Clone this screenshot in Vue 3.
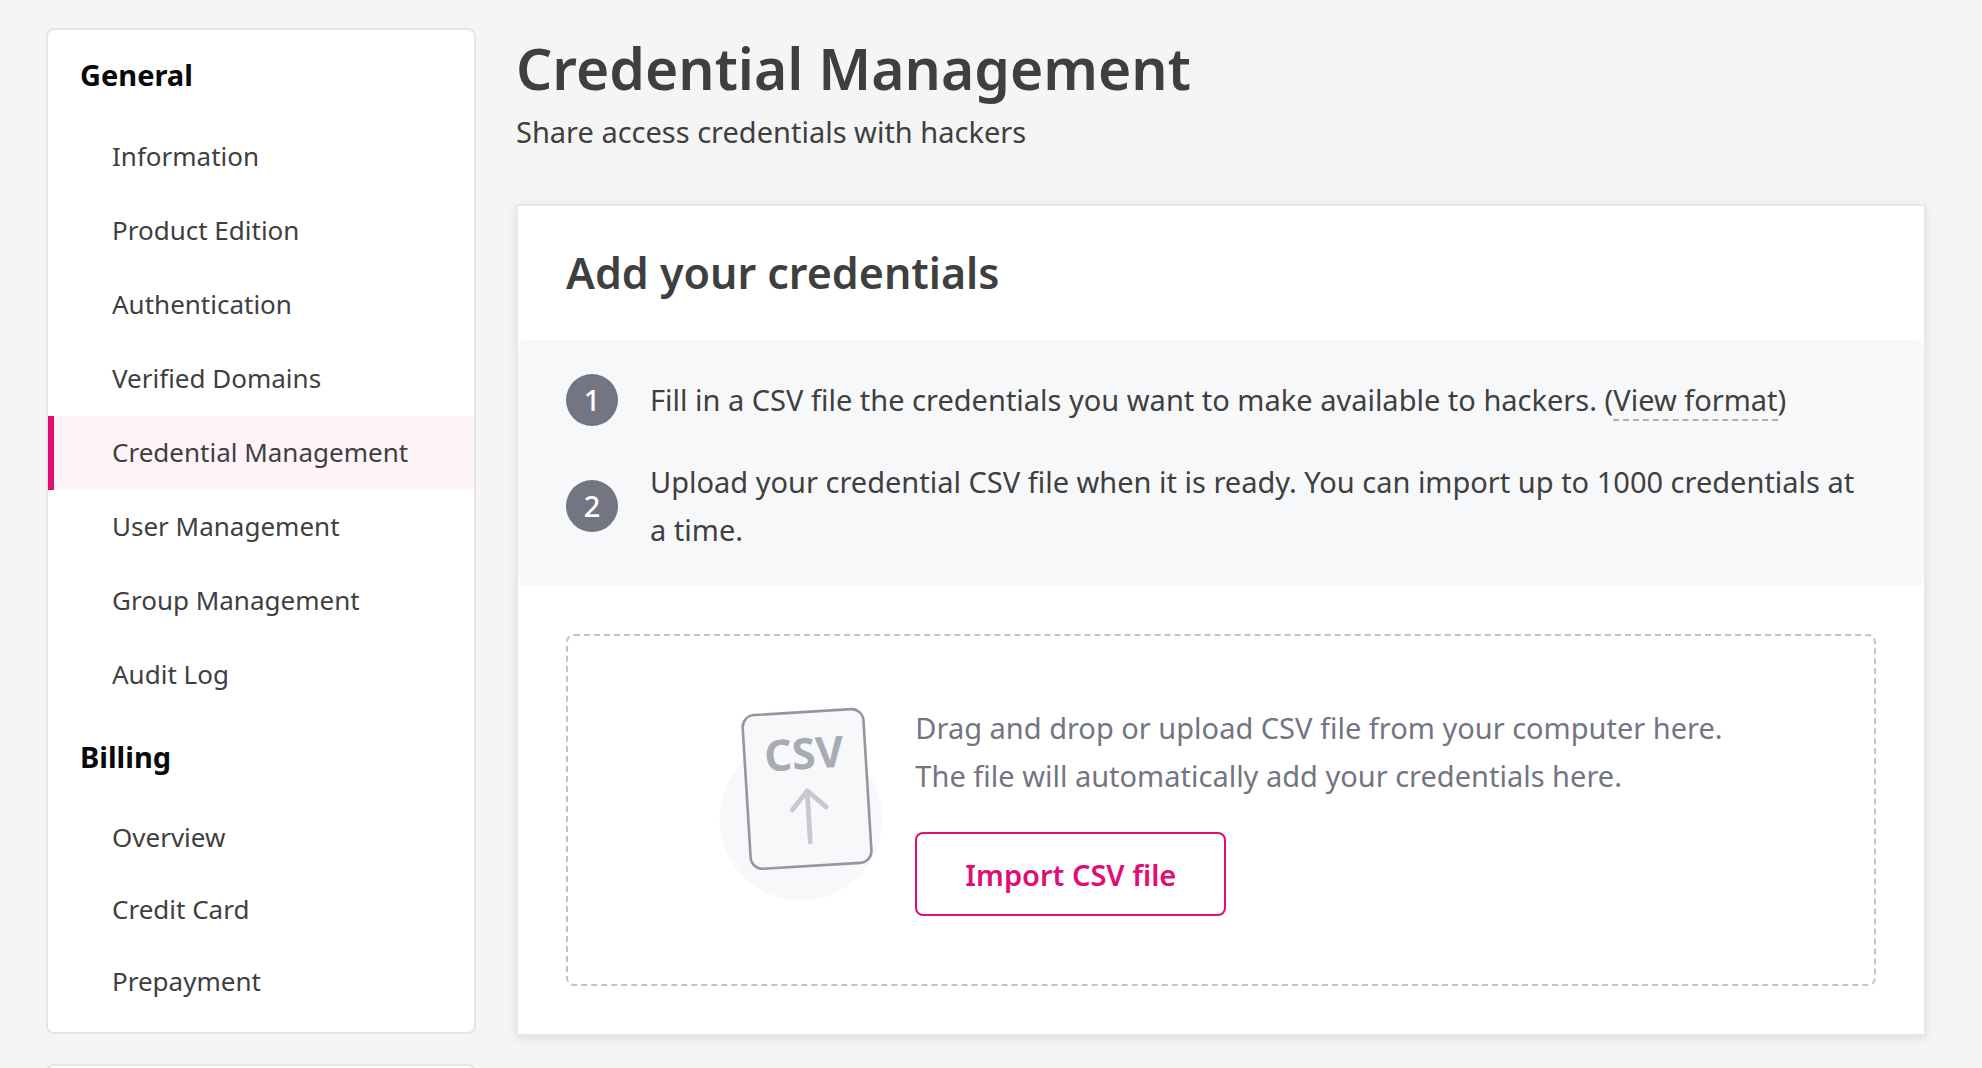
<script setup>
const sections = [
  {
    title: 'General',
    items: [
      'Information',
      'Product Edition',
      'Authentication',
      'Verified Domains',
      'Credential Management',
      'User Management',
      'Group Management',
      'Audit Log',
    ],
  },
  { title: 'Billing', compact: true, items: ['Overview', 'Credit Card', 'Prepayment'] },
]
const current = 'Credential Management'
</script>

<template>
  <div class="page">
    <aside class="sidebar">
      <nav class="panel">
        <section v-for="section in sections" :key="section.title">
          <h2 class="nav-title">{{ section.title }}</h2>
          <ul class="nav-list" :class="{ compact: section.compact }">
            <li v-for="item in section.items" :key="item">
              <a
                href="#"
                class="nav-link"
                :class="{ active: item === current }"
                :aria-current="item === current ? 'page' : null"
              >{{ item }}</a>
            </li>
          </ul>
        </section>
      </nav>
      <div class="panel next"></div>
    </aside>

    <main class="content">
      <header class="intro">
        <h1>Credential Management</h1>
        <p>Share access credentials with hackers</p>
      </header>

      <section class="card">
        <h2 class="card-title">Add your credentials</h2>
        <ol class="steps">
          <li>
            <span class="badge">1</span>
            <p>Fill in a CSV file the credentials you want to make available to hackers. (<a href="#" class="format">View format</a>)</p>
          </li>
          <li>
            <span class="badge">2</span>
            <p>Upload your credential CSV file when it is ready. You can import up to 1000 credentials at a time.</p>
          </li>
        </ol>
        <div class="card-body">
          <div class="dropzone">
            <svg class="art" viewBox="0 0 164 212" width="164" height="212" aria-hidden="true">
              <circle cx="82" cy="115" r="81.5" fill="#f7f8fa" />
              <g transform="rotate(-3.5 87 68)">
                <rect x="26.5" y="8" width="121" height="154" rx="12" fill="#f7f8fa" stroke="#9596a2" stroke-width="2.6" />
                <text x="86" y="65" text-anchor="middle" class="art-label">CSV</text>
                <path d="M87 138V87M71 105l16-18 18 17" fill="none" stroke="#c8c9ce" stroke-width="4.8" stroke-linecap="round" stroke-linejoin="round" />
              </g>
            </svg>
            <div class="drop-text">
              <p>Drag and drop or upload CSV file from your computer here.<br />The file will automatically add your credentials here.</p>
              <button type="button" class="import">Import CSV file</button>
            </div>
          </div>
        </div>
      </section>
    </main>
  </div>
</template>

<style>
body {
  margin: 0;
  background: #f5f5f5;
}
</style>

<style scoped>
.page {
  box-sizing: border-box;
  display: flex;
  gap: 40px;
  height: 100vh;
  overflow: hidden;
  padding: 28px 56px 0 46px;
  color: #3f3f3f;
  font-family: "Noto Sans", "Open Sans", sans-serif;
}
h1,
h2,
p,
ul,
ol {
  margin: 0;
  padding: 0;
}
ul,
ol {
  list-style: none;
}
.sidebar {
  flex: 0 0 430px;
  display: flex;
  flex-direction: column;
  gap: 30px;
}
.panel {
  flex-shrink: 0;
  background: #fff;
  border: 2px solid #e5e5e5;
  border-radius: 8px;
  padding-bottom: 14px;
}
.panel.next {
  height: 60px;
}
.nav-title {
  padding-left: 32px;
  color: #0a0a0a;
  font-size: 29px;
  font-weight: 700;
  line-height: 90px;
}
.nav-link {
  display: block;
  padding: 0 0 2px 58px;
  border-left: 6px solid transparent;
  color: inherit;
  font-size: 26px;
  line-height: 72px;
  text-decoration: none;
}
.compact .nav-link {
  line-height: 70px;
}
.nav-link.active {
  border-left-color: #e20d72;
  background: #fef3f9;
}
.content {
  flex: 1;
  min-width: 0;
}
.intro {
  padding-bottom: 48px;
}
.intro h1 {
  font-size: 57px;
  font-weight: 600;
  line-height: 80px;
}
.intro p {
  font-size: 29px;
  line-height: 48px;
}
.card {
  background: #fff;
  border: 2px solid #e8e8e8;
  box-shadow: 0 2px 8px rgba(0, 0, 0, 0.1);
}
.card-title {
  padding: 0 48px;
  font-size: 43px;
  font-weight: 600;
  line-height: 134px;
}
.steps {
  display: flex;
  flex-direction: column;
  gap: 32px;
  padding: 34px 48px 32px;
  border-radius: 8px;
  background: #f7f8fa;
}
.steps li {
  display: flex;
  align-items: center;
  gap: 32px;
}
.steps p,
.drop-text p {
  font-size: 29px;
  line-height: 48px;
}
.badge {
  flex: 0 0 52px;
  border-radius: 50%;
  background: #737583;
  color: #fff;
  font-size: 29px;
  font-weight: 500;
  line-height: 52px;
  text-align: center;
}
.format {
  border-bottom: 2px dashed #b0b0b0;
  color: inherit;
  text-decoration: none;
}
.card-body {
  padding: 48px;
}
.dropzone {
  display: flex;
  justify-content: center;
  gap: 32px;
  padding: 68px 32px;
  border: 2px dashed #c4c4c4;
  border-radius: 8px;
}
.art {
  flex-shrink: 0;
}
.art-label {
  fill: #a9abb4;
  font-size: 43px;
  font-weight: 700;
}
.drop-text p {
  margin-bottom: 32px;
  color: #737583;
}
.import {
  height: 84px;
  padding: 0 48px;
  border: 2px solid #e20d72;
  border-radius: 8px;
  background: #fff;
  color: #e20d72;
  font-family: inherit;
  font-size: 29px;
  font-weight: 600;
}
</style>
